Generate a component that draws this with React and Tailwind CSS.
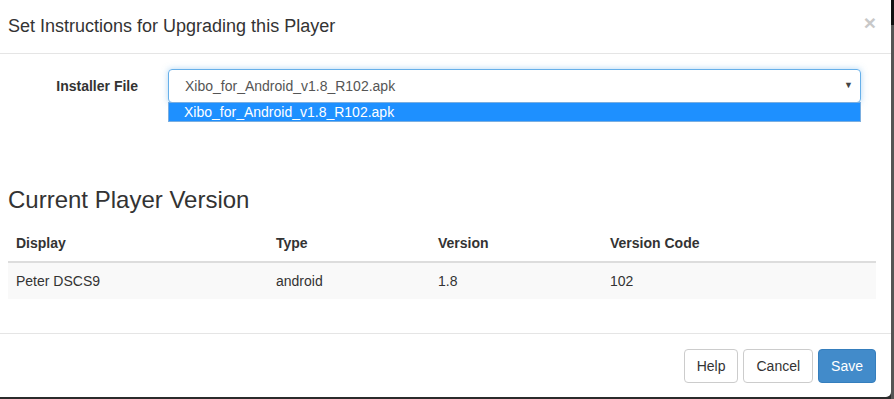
import React from 'react'

const rows = [
    { display: 'Peter DSCS9', type: 'android', version: '1.8', code: '102' },
]

export default function App() {
    const file = 'Xibo_for_Android_v1.8_R102.apk'

    return (
        <div className="w-[894px] h-[399px] flex bg-[#2b2b2b] overflow-hidden" style={{ fontFamily: '"Liberation Sans", Arial, sans-serif' }}>
            <div className="w-[891px] h-[397px] bg-white rounded-br-[5px] flex flex-col text-[#333] text-[14px]">

                <div className="h-[54px] shrink-0 flex items-center justify-between pl-[8px] pr-[15px] border-b border-[#e5e5e5]">
                    <h4 className="text-[18px] leading-[20px] mt-[-2px]">Set Instructions for Upgrading this Player</h4>
                    <span className="text-[21px] font-bold leading-none text-[#c8c8c8] mt-[-8px]">×</span>
                </div>

                <div className="pl-[8px] pr-[15px] pt-[15px] pb-[34px] border-b border-[#e5e5e5]">
                    <div className="flex">
                        <label className="w-[130px] pt-[7px] text-right font-bold leading-[20px]">Installer File</label>
                        <div className="relative ml-[30px] w-[693px]">
                            <div className="h-[34px] flex items-center justify-between rounded-[4px] border border-[#66afe9] shadow-[0_0_6px_rgba(102,175,233,0.5)] pl-[16px] pr-[7px] text-[#555]">
                                <span>{file}</span>
                                <span className="text-[9px] text-[#444]">▼</span>
                            </div>
                            <div className="absolute left-0 right-0 top-[33px] h-[20px] bg-[#1e90ff] border border-[#7aaee0] text-white pl-[15px] leading-[19px]">
                                {file}
                            </div>
                        </div>
                    </div>

                    <h3 className="mt-[84px] mb-[12px] text-[24px] leading-[26px]">Current Player Version</h3>

                    <table className="w-full text-left border-collapse">
                        <thead>
                            <tr className="border-b-2 border-[#dddddd]">
                                <th className="w-[260px] px-[8px] py-[8px] leading-[20px] font-bold">Display</th>
                                <th className="w-[162px] px-[8px] py-[8px] leading-[20px] font-bold">Type</th>
                                <th className="w-[172px] px-[8px] py-[8px] leading-[20px] font-bold">Version</th>
                                <th className="px-[8px] py-[8px] leading-[20px] font-bold">Version Code</th>
                            </tr>
                        </thead>
                        <tbody>
                            {rows.map(r => (
                                <tr key={r.display} className="bg-[#f9f9f9]">
                                    <td className="px-[8px] py-[8px] leading-[20px]">{r.display}</td>
                                    <td className="px-[8px] py-[8px] leading-[20px]">{r.type}</td>
                                    <td className="px-[8px] py-[8px] leading-[20px]">{r.version}</td>
                                    <td className="px-[8px] py-[8px] leading-[20px]">{r.code}</td>
                                </tr>
                            ))}
                        </tbody>
                    </table>
                </div>

                <div className="flex justify-end gap-[5px] pr-[15px] pt-[15px]">
                    <button className="h-[34px] px-[12px] rounded-[4px] border border-[#cccccc] bg-white text-[#333]">Help</button>
                    <button className="h-[34px] px-[12px] rounded-[4px] border border-[#cccccc] bg-white text-[#333]">Cancel</button>
                    <button className="h-[34px] px-[12px] rounded-[4px] border border-[#357ebd] bg-[#428bca] text-white">Save</button>
                </div>
            </div>
            <div className="w-[3px] flex flex-col">
                <div className="h-[25px] bg-[#111]"></div>
                <div className="flex-1 bg-[#555]"></div>
            </div>
        </div>
    )
}
